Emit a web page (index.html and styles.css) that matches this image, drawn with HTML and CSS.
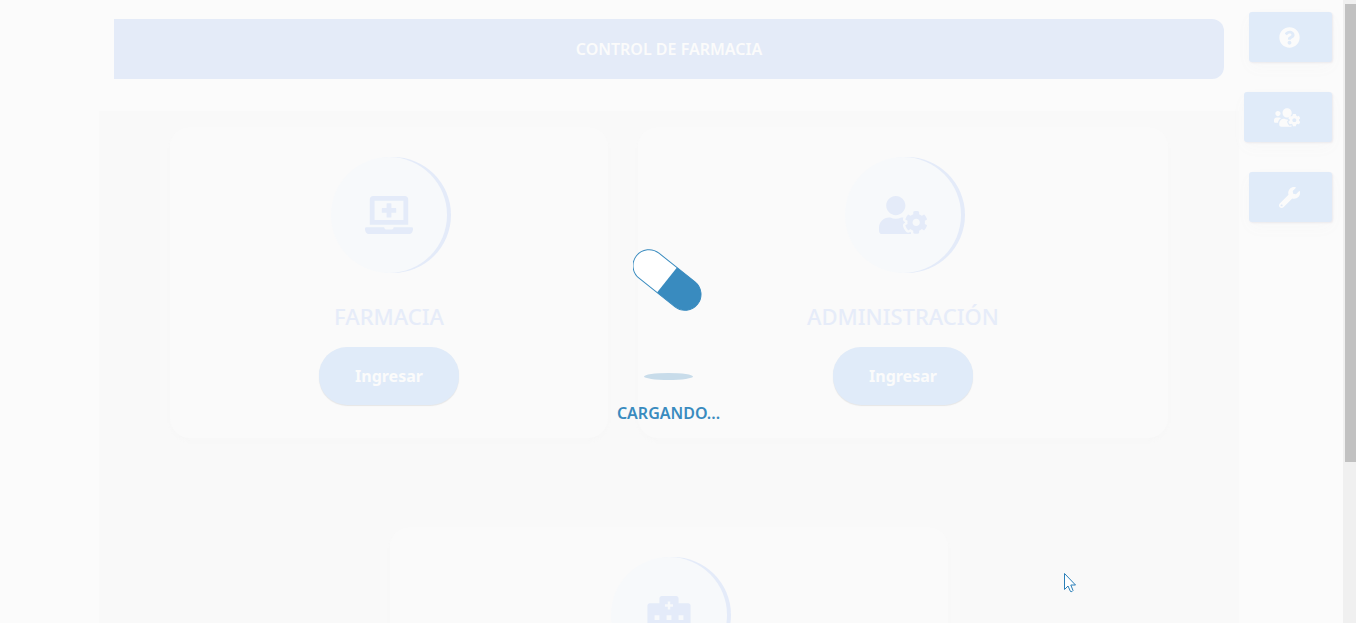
FILE: index.html
```html
<!DOCTYPE html>
<html lang="es">
<head>
<meta charset="utf-8">
<title>Control de Farmacia</title>
<link rel="stylesheet" href="styles.css">
</head>
<body>
<div class="page">
  <header class="banner"><h1 class="banner-title">CONTROL DE FARMACIA</h1></header>
  <main class="panel">
    <section class="card card-narrow">
      <div class="badge">
        <svg class="icon-large" viewBox="0 0 640 512" aria-hidden="true"><path d="M232 224h56v56a8 8 0 0 0 8 8h48a8 8 0 0 0 8-8v-56h56a8 8 0 0 0 8-8v-48a8 8 0 0 0-8-8h-56v-56a8 8 0 0 0-8-8h-48a8 8 0 0 0-8 8v56h-56a8 8 0 0 0-8 8v48a8 8 0 0 0 8 8zM576 48a48.14 48.14 0 0 0-48-48H112a48.14 48.14 0 0 0-48 48v336h512zm-64 272H128V64h384zm112 96H381.54c-.74 19.81-14.71 32-32.74 32H288c-18.69 0-33-17.47-32.77-32H16a16 16 0 0 0-16 16v16a64.19 64.19 0 0 0 64 64h512a64.19 64.19 0 0 0 64-64v-16a16 16 0 0 0-16-16z"/></svg>
      </div>
      <h2 class="card-title">FARMACIA</h2>
      <button class="enter" type="button">Ingresar</button>
    </section>
    <section class="card card-wide">
      <div class="badge">
        <svg class="icon-large" viewBox="0 0 640 512" aria-hidden="true"><path d="M610.5 373.3c2.6-14.1 2.6-28.5 0-42.6l25.8-14.9c3-1.7 4.3-5.2 3.3-8.5-6.7-21.6-18.2-41.2-33.2-57.4-2.3-2.5-6-3.1-9-1.4l-25.8 14.9c-10.9-9.3-23.4-16.5-36.9-21.3v-29.8c0-3.4-2.4-6.4-5.7-7.1-22.3-5-45-4.8-66.2 0-3.3.7-5.7 3.7-5.7 7.1v29.8c-13.5 4.8-26 12-36.9 21.3l-25.8-14.9c-2.9-1.7-6.7-1.1-9 1.4-15 16.2-26.5 35.8-33.2 57.4-1 3.3.4 6.8 3.3 8.5l25.8 14.9c-2.6 14.1-2.6 28.5 0 42.6l-25.8 14.9c-3 1.7-4.3 5.2-3.3 8.5 6.7 21.6 18.2 41.1 33.2 57.4 2.3 2.5 6 3.1 9 1.4l25.8-14.9c10.9 9.3 23.4 16.5 36.9 21.3v29.8c0 3.4 2.4 6.4 5.7 7.1 22.3 5 45 4.8 66.2 0 3.3-.7 5.7-3.7 5.7-7.1v-29.8c13.5-4.8 26-12 36.9-21.3l25.8 14.9c2.9 1.7 6.7 1.1 9-1.4 15-16.2 26.5-35.8 33.2-57.4 1-3.3-.4-6.8-3.3-8.5l-25.8-14.9zM496 400.5c-26.8 0-48.5-21.8-48.5-48.5s21.8-48.5 48.5-48.5 48.5 21.8 48.5 48.5-21.7 48.5-48.5 48.5zM224 256c70.7 0 128-57.3 128-128S294.7 0 224 0 96 57.3 96 128s57.3 128 128 128zm201.2 226.5c-2.3-1.2-4.6-2.6-6.8-3.9l-7.9 4.6c-6 3.4-12.8 5.3-19.6 5.3-10.9 0-21.4-4.6-28.9-12.6-18.3-19.8-32.3-43.9-40.2-69.6-5.5-17.7 1.9-36.4 17.9-45.7l7.9-4.6c-.1-2.6-.1-5.2 0-7.8l-7.9-4.6c-16-9.2-23.4-28-17.9-45.7.9-2.9 2.2-5.8 3.2-8.7-3.8-.3-7.5-1.2-11.4-1.2h-16.7c-22.2 10.2-46.9 16-72.9 16s-50.6-5.8-72.9-16h-16.7C60.2 288 0 348.2 0 422.4V464c0 26.5 21.5 48 48 48h352c10.1 0 19.5-3.2 27.2-8.5-1.2-3.8-2-7.7-2-11.8v-9.2z"/></svg>
      </div>
      <h2 class="card-title">ADMINISTRACIÓN</h2>
      <button class="enter" type="button">Ingresar</button>
    </section>
    <section class="card card-center">
      <div class="badge">
        <svg class="icon-large" viewBox="-32 0 640 512" aria-hidden="true"><path fill-rule="evenodd" d="M544 96H416V32c0-17.700-14.300-32-32-32H192c-17.700 0-32 14.300-32 32v64H32c-17.700 0-32 14.300-32 32v368c0 8.800 7.200 16 16 16h544c8.800 0 16-7.200 16-16V128c0-17.700-14.300-32-32-32zM272 72h32v38h38v32h-38v38h-32v-38h-38v-32h38zM96 256h64v64H96zm160 0h64v64h-64zm160 0h64v64h-64zM96 384h64v64H96zm160 0h64v128h-64zm160 0h64v64h-64z"/></svg>
      </div>
    </section>
  </main>

  <nav class="tools" aria-label="Herramientas">
    <button class="tool" type="button" aria-label="Ayuda">
      <svg class="icon-small" viewBox="0 0 512 512" aria-hidden="true"><path d="M504 256c0 136.997-111.043 248-248 248S8 392.997 8 256C8 119.083 119.043 8 256 8s248 111.083 248 248zM262.655 90c-54.497 0-89.255 22.957-116.549 63.758-3.536 5.286-2.353 12.415 2.715 16.258l34.699 26.31c5.205 3.947 12.621 3.008 16.665-2.122 17.864-22.658 30.113-35.797 57.303-35.797 20.429 0 45.698 13.148 45.698 32.958 0 14.976-12.363 22.667-32.534 33.976C247.128 238.528 216 254.941 216 296v4c0 6.627 5.373 12 12 12h56c6.627 0 12-5.373 12-12v-1.333c0-28.462 83.186-29.647 83.186-106.667 0-58.002-60.165-102-116.531-102zM256 338c-25.365 0-46 20.635-46 46 0 25.364 20.635 46 46 46s46-20.636 46-46c0-25.365-20.635-46-46-46z"/></svg>
    </button>
    <button class="tool" type="button" aria-label="Usuarios">
      <svg class="icon-small" viewBox="0 0 640 512" aria-hidden="true"><path d="M96 224c35.300 0 64-28.700 64-64s-28.700-64-64-64-64 28.700-64 64 28.700 64 64 64zM128 256H64c-35.300 0-64 28.700-64 64v32c0 17.700 14.300 32 32 32h65.900c6.300-47.400 34.900-87.300 75.200-109.400C161.500 263.100 145.600 256 128 256zM320 256c61.900 0 112-50.100 112-112S381.900 32 320 32 208 82.100 208 144s50.100 112 112 112zm105.200 194.500c-2.300-1.200-4.600-2.600-6.800-3.900-8.200 4.800-15.300 9.800-27.500 9.800-10.900 0-21.400-4.600-28.900-12.600-18.300-19.800-32.300-43.900-40.200-69.600-10.700-34.500 24.900-49.700 25.800-50.300-.1-2.600-.1-5.200 0-7.800l-7.900-4.600c-3.800-2.200-7-5-9.800-8.100-3.300.2-6.500.6-9.800.6-24.600 0-47.600-6-68.500-16h-8.300C179.600 288 128 339.600 128 403.200V432c0 26.500 21.500 48 48 48h255.400c-3.700-6-6.200-12.800-6.200-20.300z"/><path d="M610.5 341.3c2.600-14.100 2.600-28.500 0-42.600l25.800-14.900c3-1.700 4.300-5.200 3.300-8.500-6.700-21.600-18.200-41.200-33.200-57.400-2.300-2.500-6-3.100-9-1.400l-25.800 14.900c-10.900-9.300-23.400-16.500-36.900-21.300v-29.800c0-3.400-2.400-6.400-5.700-7.100-22.300-5-45-4.800-66.200 0-3.300.7-5.700 3.700-5.700 7.100v29.800c-13.500 4.800-26 12-36.900 21.300l-25.800-14.900c-2.900-1.700-6.700-1.100-9 1.400-15 16.200-26.500 35.800-33.200 57.400-1 3.300.4 6.800 3.300 8.500l25.800 14.900c-2.600 14.100-2.600 28.500 0 42.600l-25.800 14.900c-3 1.700-4.300 5.200-3.300 8.500 6.700 21.600 18.200 41.100 33.200 57.400 2.300 2.500 6 3.100 9 1.400l25.800-14.900c10.900 9.300 23.400 16.500 36.900 21.300v29.800c0 3.400 2.400 6.400 5.700 7.100 22.300 5 45 4.800 66.200 0 3.300-.7 5.700-3.700 5.700-7.100v-29.800c13.500-4.800 26-12 36.900-21.300l25.800 14.900c2.900 1.700 6.700 1.100 9-1.400 15-16.200 26.500-35.800 33.200-57.400 1-3.300-.4-6.800-3.300-8.500zM496 368.500c-26.800 0-48.500-21.800-48.500-48.500s21.800-48.500 48.500-48.500 48.500 21.800 48.500 48.500-21.700 48.500-48.500 48.500z"/></svg>
    </button>
    <button class="tool" type="button" aria-label="Configuración">
      <svg class="icon-small" viewBox="0 0 512 512" aria-hidden="true"><path d="M507.730 109.100c-2.240-9.030-13.540-12.090-20.120-5.510l-74.360 74.360-67.880-11.310-11.310-67.880 74.360-74.360c6.620-6.620 3.430-17.900-5.660-20.160-47.380-11.740-99.550.91-136.580 37.930-39.640 39.640-50.550 97.100-34.050 147.200L18.740 402.760c-24.990 24.990-24.990 65.510 0 90.500 24.990 24.990 65.510 24.990 90.500 0l213.210-213.210c50.120 16.710 107.470 5.680 147.370-34.220 37.070-37.070 49.700-89.320 37.910-136.730zM64 472c-13.250 0-24-10.750-24-24 0-13.260 10.750-24 24-24s24 10.740 24 24c0 13.250-10.750 24-24 24z"/></svg>
    </button>
  </nav>

  <div class="loader" role="status">
    <svg class="pill" viewBox="0 0 72 64" aria-hidden="true">
      <g transform="rotate(38.500 34 32)">
        <rect x="-5" y="16" width="78" height="32" rx="16" fill="#fff"/>
        <path d="M34 16h23a16 16 0 0 1 0 32H34z" fill="#398bbf"/>
        <rect x="-5" y="16" width="78" height="32" rx="16" fill="none" stroke="#398bbf"/>
      </g>
    </svg>
    <div class="pill-shadow"></div>
    <p class="loader-text">CARGANDO...</p>
  </div>

  <svg class="pointer" viewBox="0 0 12 20" aria-hidden="true"><path d="M.5.5v16l3.500-3.500 2.500 5.500q1.500.8 2.500-1L6.800 12h4.700z" fill="#fff" stroke="#2a7fb8"/></svg>
</div>
<div class="scroll-track"><div class="scroll-thumb"></div></div>
</body>
</html>
```
FILE: styles.css
```css
* { box-sizing: border-box; }

body {
  margin: 0;
  height: 100vh;
  display: flex;
  overflow: hidden;
  background: #fbfbfb;
  font-family: "Noto Sans", "Open Sans", sans-serif;
}

.page {
  position: relative;
  flex: 1;
  min-width: 0;
  padding: 19px 104px 0 99px;
  overflow: hidden;
}

.banner {
  display: flex;
  align-items: center;
  justify-content: center;
  height: 60px;
  margin: 0 15px 32px;
  border-radius: 0 12px 12px 0;
  background: #e4ebf8;
}

.banner-title {
  margin: 0;
  color: #fbfbfb;
  font-size: 16px;
  font-weight: 600;
  line-height: 20px;
}

.panel {
  display: flex;
  flex-wrap: wrap;
  justify-content: center;
  gap: 89px 30px;
  padding: 16px 71px;
  background: #f9f9f9;
}

.card {
  display: flex;
  flex-direction: column;
  align-items: center;
  min-height: 311px;
  padding: 30px 20px 32px;
  border-radius: 20px;
  background: #fafafa;
  box-shadow: 0 3px 4px #f7f7f7;
}

.card-narrow { flex: 398 1 0; }
.card-wide { flex: 490 1 0; }
.card-center { flex: 0 0 56%; }

.badge {
  display: flex;
  align-items: center;
  justify-content: center;
  width: 116px;
  height: 116px;
  border-radius: 50%;
  background: #f7f9fb;
  box-shadow: 4px 0 0 #e4ebf9;
  color: #e4ebf9;
}

.icon-large {
  width: 48px;
  fill: currentColor;
}

.card-title {
  margin: 28px 0 16px;
  color: #e6ecf9;
  font-size: 22px;
  font-weight: 500;
  line-height: 30px;
}

.enter {
  width: 140px;
  height: 58px;
  padding: 0;
  border: 0;
  border-radius: 28px;
  background: #e0ebf9;
  box-shadow: 0 1px 1px #e6e6e6;
  color: #fbfbfb;
  font: 700 16px/24px "Noto Sans", "Open Sans", sans-serif;
}

.tools {
  position: absolute;
  top: 12px;
  right: 11px;
  display: flex;
  flex-direction: column;
  align-items: flex-end;
  gap: 30px;
}

.tool {
  display: flex;
  align-items: center;
  height: 50px;
  padding: 0 32px 0 30px;
  border: 0;
  border-radius: 3px;
  background: #e0ebf9;
  box-shadow: 1px 1px 2px #ebe9ed, 0 6px 16px #f8f8f8;
  color: #fbfbfb;
}

.icon-small {
  height: 21px;
  fill: currentColor;
}

.loader {
  position: absolute;
  top: 248px;
  right: 105px;
  left: 99px;
  display: flex;
  flex-direction: column;
  align-items: center;
}

.pill {
  width: 72px;
  height: 64px;
}

.pill-shadow {
  width: 49px;
  height: 7px;
  margin: 61px 0 23px;
  border-radius: 50%;
  background: #c8dcea;
}

.loader-text {
  margin: 0;
  color: #398bbf;
  font-size: 16px;
  font-weight: 600;
  line-height: 20px;
}

.pointer {
  position: absolute;
  top: 573px;
  right: 267px;
  width: 12px;
  height: 20px;
}

.scroll-track {
  width: 13px;
  padding: 4px 0 0 2px;
  background: #f0f0f0;
}

.scroll-thumb {
  height: 74%;
  background: #c1c1c1;
}
```
